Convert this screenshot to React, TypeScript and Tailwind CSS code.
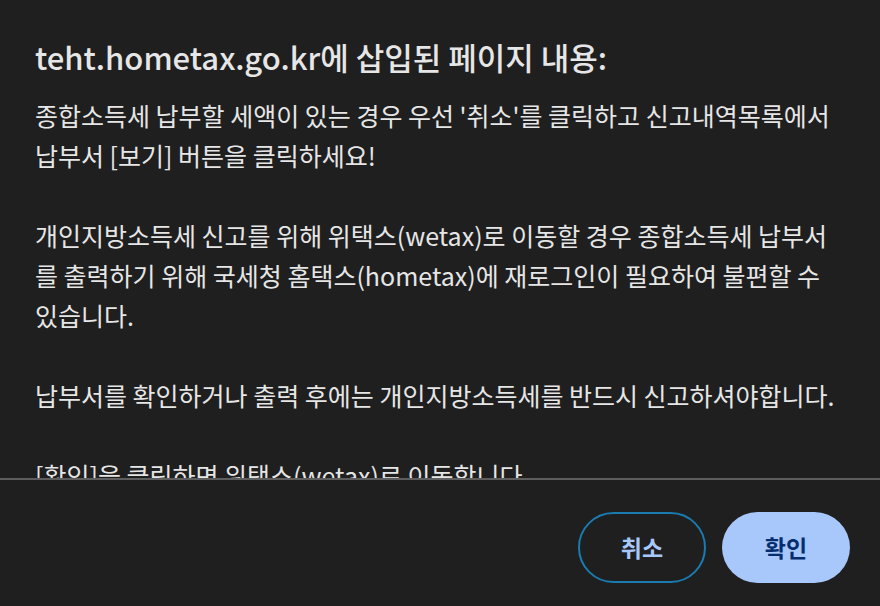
const paragraphs = [
  [
    "종합소득세 납부할 세액이 있는 경우 우선 '취소'를 클릭하고 신고내역목록에서",
    "납부서 [보기] 버튼을 클릭하세요!",
  ],
  [
    "개인지방소득세 신고를 위해 위택스(wetax)로 이동할 경우 종합소득세 납부서",
    "를 출력하기 위해 국세청 홈택스(hometax)에 재로그인이 필요하여 불편할 수",
    "있습니다.",
  ],
  ["납부서를 확인하거나 출력 후에는 개인지방소득세를 반드시 신고하셔야합니다."],
  ["[확인]을 클릭하면 위택스(wetax)로 이동합니다."],
];

export default function App() {
  return (
    <div
      className="w-[880px] h-[606px] bg-[#1f1f1f] text-[#e6e6e6] flex flex-col overflow-hidden"
      style={{ fontFamily: '"Noto Sans CJK KR", "Noto Sans", sans-serif' }}
    >
      <div className="px-[35px] pt-[37px] pb-[18px] text-[31px] leading-[40px] font-medium whitespace-nowrap">
        teht.hometax.go.kr에 삽입된 페이지 내용:
      </div>
      <div className="h-[383px] overflow-hidden px-[35px] text-[25px] leading-[40px] flex flex-col gap-[40px]">
        {paragraphs.map((lines, i) => (
          <p key={i}>
            {lines.map((line, j) => (
              <span key={j} className="block whitespace-nowrap">
                {line}
              </span>
            ))}
          </p>
        ))}
      </div>
      <div className="h-[2px] bg-[#5e5e5e]" />
      <div className="flex justify-end gap-4 pr-[30px] pt-[32px]">
        <button className="w-[128px] h-[71px] rounded-full border-2 border-[#1a7bb0] text-[#a8c7fa] text-[23px] font-semibold">
          취소
        </button>
        <button className="w-[128px] h-[71px] rounded-full bg-[#a8c7fa] text-[#062e6f] text-[23px] font-semibold">
          확인
        </button>
      </div>
    </div>
  );
}
